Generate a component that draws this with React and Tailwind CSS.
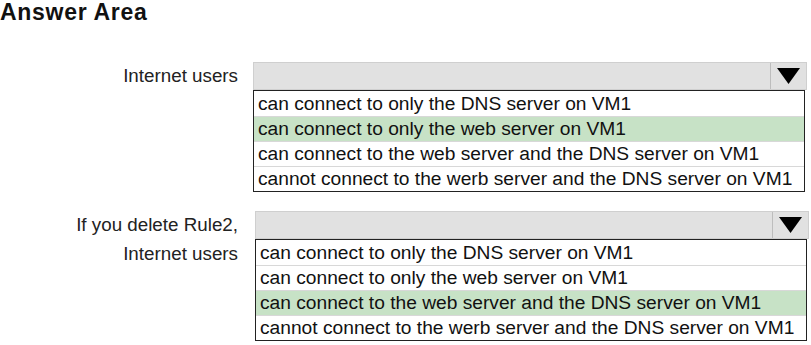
const options = [
  'can connect to only the DNS server on VM1',
  'can connect to only the web server on VM1',
  'can connect to the web server and the DNS server on VM1',
  'cannot connect to the werb server and the DNS server on VM1',
];

const Arrow = () => (
  <svg width="23" height="16" viewBox="0 0 23 16">
    <polygon points="0,0 23,0 11.5,16" fill="#000" />
  </svg>
);

const DropDown = ({ selected, offset }) => (
  <div className={`flex flex-col w-[554px] ${offset}`}>
    <div className="flex h-[28px] bg-[#e1e1e1] border border-[#cfcfcf]">
      <div className="flex-1" />
      <div className="w-[36px] flex items-center justify-center border-l border-[#bdbdbd]">
        <Arrow />
      </div>
    </div>
    <div className="border-[1.5px] border-[#222] mr-[2px] bg-white">
      {options.map((opt, i) => (
        <div
          key={i}
          className={`h-[25px] px-[4px] flex items-center text-[19.2px] leading-none text-[#111] ${
            i > 0 ? 'border-t border-[#d8d8d8]' : ''
          } ${i === selected ? 'bg-[#c7e2c6] text-[#1b2e1b]' : ''}`}
        >
          {opt}
        </div>
      ))}
    </div>
  </div>
);

export default function App() {
  return (
    <div className="w-[811px] h-[345px] bg-white overflow-hidden" style={{ fontFamily: '"Liberation Sans", Arial, sans-serif' }}>
      <h1 className="text-[23px] font-bold leading-[24px] tracking-[0.7px] text-[#111]">Answer Area</h1>

      <div className="flex mt-[38px]">
        <div className="w-[240px] text-right text-[18.8px] text-[#222] pr-[2px] leading-[28px]">Internet users</div>
        <DropDown selected={1} offset="ml-[13px]" />
      </div>

      <div className="flex mt-[19px]">
        <div className="w-[240px] text-right text-[18.8px] text-[#222] pr-[2px] leading-[28px]">
          <div>If you delete Rule2,</div>
          <div className="mt-[1px]">Internet users</div>
        </div>
        <DropDown selected={2} offset="ml-[15px]" />
      </div>
    </div>
  );
}
